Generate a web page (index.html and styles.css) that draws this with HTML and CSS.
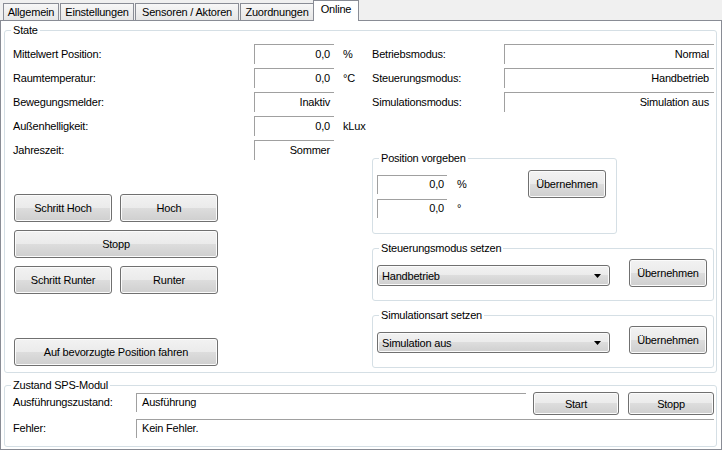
FILE: index.html
```html
<!DOCTYPE html>
<html lang="de">
<head>
<meta charset="utf-8">
<title>Online</title>
<link rel="stylesheet" href="styles.css">
</head>
<body>
<div class="window">
  <div class="tabstrip">
    <div class="tab t1">Allgemein</div>
    <div class="tab t2">Einstellungen</div>
    <div class="tab t3">Sensoren / Aktoren</div>
    <div class="tab t4">Zuordnungen</div>
    <div class="tab t5 active">Online</div>
  </div>
  <div class="panel">
    <fieldset class="group state">
      <legend>State</legend>
      <div class="state-body">
        <div class="col-left">
          <div class="rows">
            <div class="row"><span class="lbl">Mittelwert Position:</span><span class="field num">0,0</span><span class="unit">%</span></div>
            <div class="row"><span class="lbl">Raumtemperatur:</span><span class="field num">0,0</span><span class="unit">°C</span></div>
            <div class="row"><span class="lbl">Bewegungsmelder:</span><span class="field num">Inaktiv</span></div>
            <div class="row"><span class="lbl">Außenhelligkeit:</span><span class="field num">0,0</span><span class="unit">kLux</span></div>
            <div class="row"><span class="lbl">Jahreszeit:</span><span class="field num">Sommer</span></div>
          </div>
          <div class="btn-grid">
            <button class="btn">Schritt Hoch</button>
            <button class="btn">Hoch</button>
            <button class="btn wide">Stopp</button>
            <button class="btn">Schritt Runter</button>
            <button class="btn">Runter</button>
          </div>
          <button class="btn pref">Auf bevorzugte Position fahren</button>
        </div>
        <div class="col-right">
          <div class="rows">
            <div class="row"><span class="lbl">Betriebsmodus:</span><span class="field num">Normal</span></div>
            <div class="row"><span class="lbl">Steuerungsmodus:</span><span class="field num">Handbetrieb</span></div>
            <div class="row"><span class="lbl">Simulationsmodus:</span><span class="field num">Simulation aus</span></div>
          </div>
          <fieldset class="group pos">
            <legend>Position vorgeben</legend>
            <div class="sub-body">
              <div class="inputs">
                <div class="in-row"><span class="field num small">0,0</span><span class="unit">%</span></div>
                <div class="in-row"><span class="field num small">0,0</span><span class="unit">°</span></div>
              </div>
              <button class="btn apply">Übernehmen</button>
            </div>
          </fieldset>
          <fieldset class="group mode">
            <legend>Steuerungsmodus setzen</legend>
            <div class="sub-body">
              <div class="combo"><span>Handbetrieb</span><svg class="arrow" width="7" height="4" viewBox="0 0 7 4"><polygon points="0,0 7,0 3.5,4" fill="#000"/></svg></div>
              <button class="btn apply">Übernehmen</button>
            </div>
          </fieldset>
          <fieldset class="group mode sim">
            <legend>Simulationsart setzen</legend>
            <div class="sub-body">
              <div class="combo"><span>Simulation aus</span><svg class="arrow" width="7" height="4" viewBox="0 0 7 4"><polygon points="0,0 7,0 3.5,4" fill="#000"/></svg></div>
              <button class="btn apply">Übernehmen</button>
            </div>
          </fieldset>
        </div>
      </div>
    </fieldset>
    <fieldset class="group plc">
      <legend>Zustand SPS-Modul</legend>
      <div class="plc-body">
        <div class="plc-row first">
          <span class="lbl">Ausführungszustand:</span>
          <span class="field txt short">Ausführung</span>
          <button class="btn small-btn start">Start</button>
          <button class="btn small-btn stop">Stopp</button>
        </div>
        <div class="plc-row second">
          <span class="lbl">Fehler:</span>
          <span class="field txt long">Kein Fehler.</span>
        </div>
      </div>
    </fieldset>
  </div>
</div>
</body>
</html>
```

FILE: styles.css
```css
* { box-sizing: border-box; }
html, body { margin: 0; padding: 0; }
body {
  width: 722px;
  height: 450px;
  overflow: hidden;
  background: #f0f0f0;
  font-family: "Liberation Sans", Arial, sans-serif;
  font-size: 11px;
  letter-spacing: -0.2px;
  color: #000;
}

/* Tabs */
.tabstrip {
  display: flex;
  align-items: flex-end;
  height: 20px;
  padding-left: 3px;
  position: relative;
  z-index: 1;
}
.tab {
  height: 17px;
  border: 1px solid #898c95;
  border-bottom: none;
  background: linear-gradient(#f7f7f7, #e6e6e6);
  text-align: center;
  line-height: 16px;
  margin-right: 1px;
  white-space: nowrap;
}
.t1 { width: 56px; }
.t2 { width: 74px; }
.t3 { width: 104px; }
.t4 { width: 74px; margin-right: -1px; }
.tab.active {
  width: 46px;
  height: 21px;
  margin-bottom: -1px;
  background: #fff;
  line-height: 17px;
}

/* Panel */
.panel {
  height: 430px;
  border: 1px solid #898c95;
  background: #fff;
  overflow: hidden;
}

.group {
  padding: 0;
  min-width: 0;
  border: 1px solid #d5dfe5;
  border-radius: 3px;
}
legend {
  padding: 0 2px;
  margin-left: 6px;
  height: 13px;
  line-height: 13px;
  white-space: nowrap;
}

.group.state { margin: 3px 4px 0 3px; }
.state-body {
  display: flex;
  padding: 7px 2px 4px 8px;
}
.col-left {
  width: 359px;
  display: flex;
  flex-direction: column;
  align-items: flex-start;
}
.col-right {
  flex: 1;
  display: flex;
  flex-direction: column;
}

.rows {
  display: flex;
  flex-direction: column;
  gap: 4px;
}
.row {
  display: flex;
  height: 20px;
  line-height: 20px;
  white-space: nowrap;
}
.col-left .lbl { width: 241px; }
.col-right .lbl { width: 132px; }

.field {
  display: block;
  height: 20px;
  line-height: 18px;
  border-top: 1px solid #a0a0a0;
  border-left: 1px solid #a0a0a0;
  background: #fff;
  white-space: nowrap;
}
.num { text-align: right; }
.col-left .row .field { width: 80px; padding-right: 4px; }
.col-right .row .field { width: 210px; padding-right: 5px; }
.col-left .unit { margin-left: 9px; }

/* Buttons */
.btn {
  display: block;
  padding: 0;
  margin: 0;
  font: inherit;
  letter-spacing: inherit;
  color: #000;
  border: 1px solid #707070;
  border-radius: 3px;
  background: linear-gradient(#f2f2f2 0%, #ebebeb 50%, #dddddd 50%, #cfcfcf 100%);
  box-shadow: inset 0 0 0 1px #fbfbfb;
  white-space: nowrap;
}
.btn-grid {
  display: grid;
  grid-template-columns: 98px 98px;
  grid-auto-rows: 28px;
  gap: 8px;
  margin: 34px 0 0 1px;
}
.btn-grid .wide { grid-column: 1 / span 2; }
.btn.pref {
  width: 204px;
  height: 28px;
  margin: 44px 0 0 1px;
}

/* Sub groups */
.group.pos { width: 245px; margin: 40px 0 0 0; }
.pos .sub-body {
  display: flex;
  align-items: flex-start;
  padding: 0 10px 15px 4px;
}
.inputs {
  display: flex;
  flex-direction: column;
  gap: 5px;
  margin-top: 10px;
}
.in-row {
  display: flex;
  height: 19px;
  line-height: 19px;
}
.field.small {
  width: 70px;
  height: 19px;
  line-height: 17px;
  padding-right: 3px;
}
.in-row .unit { margin-left: 10px; }
.btn.apply {
  width: 78px;
  height: 28px;
  margin-left: auto;
}
.pos .btn.apply { margin-top: 5px; }

.group.mode { margin: 8px 0 0 0; }
.mode .sub-body {
  display: flex;
  align-items: flex-start;
  padding: 0 6px 13px 4px;
}
.mode .btn.apply { margin-top: 4px; }
.combo {
  width: 233px;
  height: 21px;
  margin-top: 10px;
  display: flex;
  align-items: center;
  justify-content: space-between;
  padding-left: 4px;
  border: 1px solid #707070;
  border-radius: 3px;
  background: linear-gradient(#f2f2f2 0%, #ebebeb 50%, #dddddd 50%, #cfcfcf 100%);
  box-shadow: inset 0 0 0 1px #fbfbfb;
  white-space: nowrap;
}
.arrow { display: block; margin-right: 8px; }

/* PLC group */
.group.plc { margin: 6px 4px 0 3px; }
.plc-body { padding: 0 2px 8px 8px; }
.plc-row {
  display: flex;
  align-items: flex-start;
  white-space: nowrap;
}
.plc-row .lbl {
  width: 123px;
  height: 19px;
  line-height: 19px;
}
.plc-row.first .lbl,
.plc-row.first .field { margin-top: 1px; }
.plc-row.second { margin-top: 4px; }
.field.txt {
  height: 19px;
  line-height: 17px;
  padding-left: 5px;
}
.field.short { width: 390px; }
.field.long { width: 578px; }
.btn.small-btn { width: 86px; height: 23px; }
.btn.start { margin-left: 7px; }
.btn.stop { margin-left: 9px; }
```
